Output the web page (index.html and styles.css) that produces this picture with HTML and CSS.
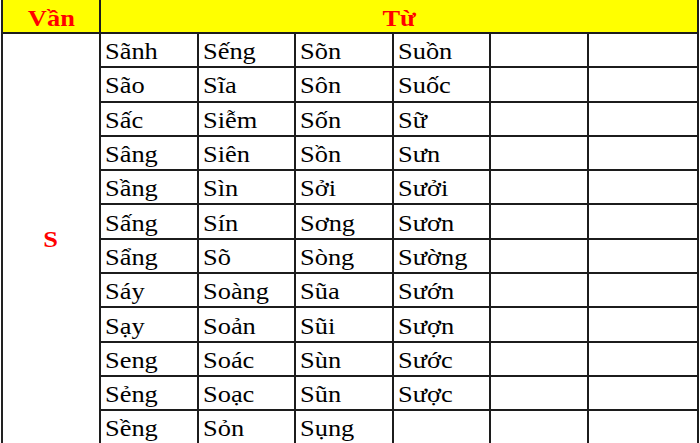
FILE: index.html
```html
<!DOCTYPE html>
<html lang="vi">
<head>
<meta charset="utf-8">
<title>Vần S</title>
<link rel="stylesheet" href="styles.css">
</head>
<body>
<div class="sheet">
  <div class="cell head"><span class="txt">Vần</span></div>
  <div class="cell head span6"><span class="txt">Từ</span></div>
  <div class="cell rhyme"><span class="txt">S</span></div>

  <div class="cell"><span class="txt">Sãnh</span></div><div class="cell"><span class="txt">Sếng</span></div><div class="cell"><span class="txt">Sõn</span></div><div class="cell"><span class="txt">Suồn</span></div><div class="cell"></div><div class="cell"></div>
  <div class="cell"><span class="txt">São</span></div><div class="cell"><span class="txt">Sĩa</span></div><div class="cell"><span class="txt">Sôn</span></div><div class="cell"><span class="txt">Suốc</span></div><div class="cell"></div><div class="cell"></div>
  <div class="cell"><span class="txt">Sấc</span></div><div class="cell"><span class="txt">Siễm</span></div><div class="cell"><span class="txt">Sốn</span></div><div class="cell"><span class="txt">Sữ</span></div><div class="cell"></div><div class="cell"></div>
  <div class="cell"><span class="txt">Sâng</span></div><div class="cell"><span class="txt">Siên</span></div><div class="cell"><span class="txt">Sồn</span></div><div class="cell"><span class="txt">Sưn</span></div><div class="cell"></div><div class="cell"></div>
  <div class="cell"><span class="txt">Sầng</span></div><div class="cell"><span class="txt">Sìn</span></div><div class="cell"><span class="txt">Sởi</span></div><div class="cell"><span class="txt">Sưởi</span></div><div class="cell"></div><div class="cell"></div>
  <div class="cell"><span class="txt">Sấng</span></div><div class="cell"><span class="txt">Sín</span></div><div class="cell"><span class="txt">Sơng</span></div><div class="cell"><span class="txt">Sươn</span></div><div class="cell"></div><div class="cell"></div>
  <div class="cell"><span class="txt">Sẩng</span></div><div class="cell"><span class="txt">Sõ</span></div><div class="cell"><span class="txt">Sòng</span></div><div class="cell"><span class="txt">Sường</span></div><div class="cell"></div><div class="cell"></div>
  <div class="cell"><span class="txt">Sáy</span></div><div class="cell"><span class="txt">Soàng</span></div><div class="cell"><span class="txt">Sũa</span></div><div class="cell"><span class="txt">Sướn</span></div><div class="cell"></div><div class="cell"></div>
  <div class="cell"><span class="txt">Sạy</span></div><div class="cell"><span class="txt">Soản</span></div><div class="cell"><span class="txt">Sũi</span></div><div class="cell"><span class="txt">Sượn</span></div><div class="cell"></div><div class="cell"></div>
  <div class="cell"><span class="txt">Seng</span></div><div class="cell"><span class="txt">Soác</span></div><div class="cell"><span class="txt">Sùn</span></div><div class="cell"><span class="txt">Sước</span></div><div class="cell"></div><div class="cell"></div>
  <div class="cell"><span class="txt">Sẻng</span></div><div class="cell"><span class="txt">Soạc</span></div><div class="cell"><span class="txt">Sũn</span></div><div class="cell"><span class="txt">Sược</span></div><div class="cell"></div><div class="cell"></div>
  <div class="cell"><span class="txt">Sềng</span></div><div class="cell"><span class="txt">Sỏn</span></div><div class="cell"><span class="txt">Sụng</span></div><div class="cell"></div><div class="cell"></div><div class="cell"></div>
</div>
</body>
</html>
```

FILE: styles.css
```css
html, body {
  margin: 0;
  padding: 0;
  background: #ffffff;
  overflow: hidden;
}

.sheet {
  display: grid;
  grid-template-columns: 98px 98px 97px 98px 97px 98px 110px;
  grid-template-rows: 34px repeat(12, 34.3px);
  margin-left: 1px;
  border-left: 2px solid #222;
  width: max-content;
  font-family: "Liberation Serif", "Times New Roman", serif;
  font-size: 24px;
  color: #000;
}

.cell {
  box-sizing: border-box;
  border-right: 2px solid #1c1c1c;
  border-bottom: 2px solid #1c1c1c;
  display: flex;
  align-items: center;
  padding: 2px 0 0 4px;
  background: #fff;
  line-height: 1;
}

.txt {
  display: inline-block;
  transform: scaleX(1.1);
  transform-origin: left center;
  white-space: nowrap;
}

.head {
  background: #ffff00;
  color: #ff0000;
  font-weight: bold;
  justify-content: center;
  padding: 4px 0 0 0;
}

.head .txt,
.rhyme .txt {
  transform-origin: center center;
}

.span6 {
  grid-column: span 6;
}

.rhyme {
  grid-row: span 12;
  color: #ff0000;
  font-weight: bold;
  justify-content: center;
  padding: 0;
}
```
